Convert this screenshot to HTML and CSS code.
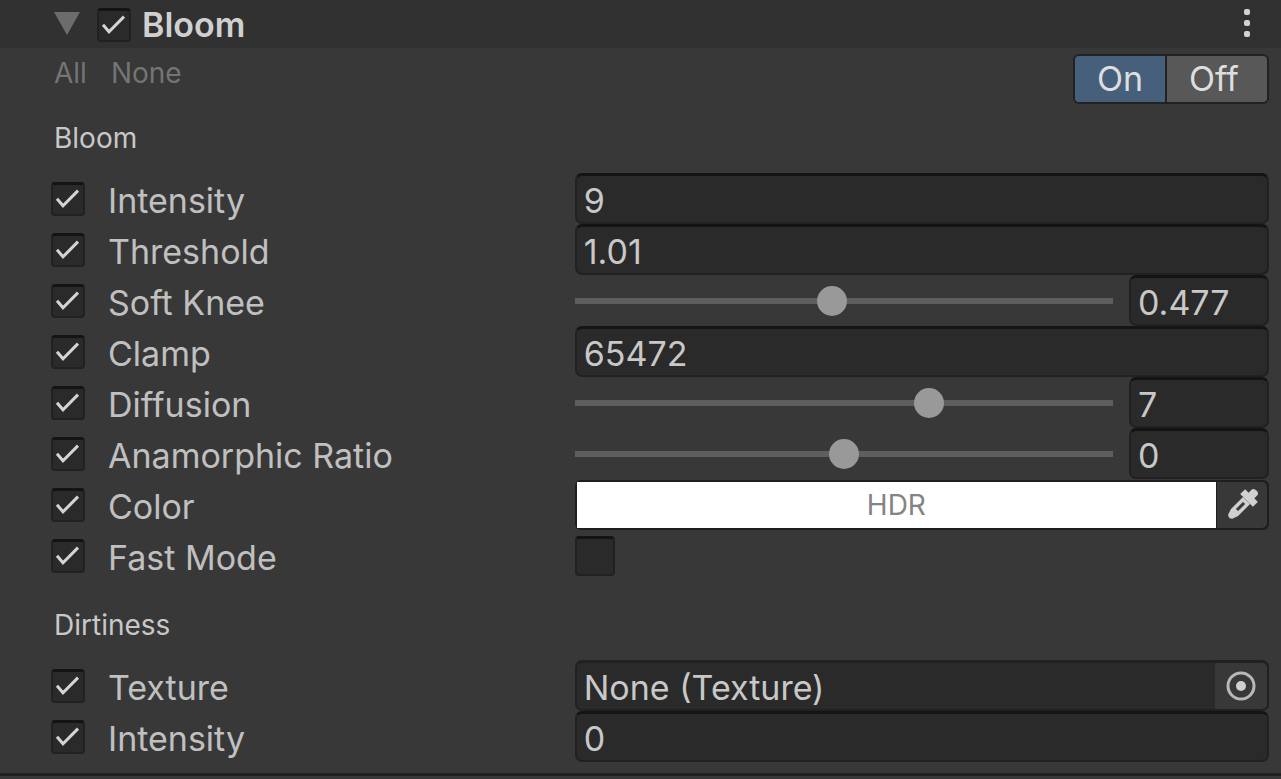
FILE: index.html
```html
<!DOCTYPE html>
<html lang="en">
<head>
<meta charset="utf-8">
<title>Bloom</title>
<link rel="stylesheet" href="styles.css">
</head>
<body>
<main class="panel">
  <header class="header">
    <button class="icon-button" type="button" aria-label="Collapse Bloom">
      <svg class="foldout" viewBox="0 0 26 24"><path d="M0 0H26L13 23Z" fill="#6c6c6c"/></svg>
    </button>
    <input class="check" type="checkbox" id="bloom" checked>
    <label class="title" for="bloom">Bloom</label>
    <button class="icon-button menu" type="button" aria-label="More options">
      <svg class="dots" viewBox="0 0 10 32"><g fill="#d2d2d2"><rect x="2" y="1" width="6" height="6" rx="2"/><rect x="2" y="12" width="6" height="6" rx="2"/><rect x="2" y="23" width="6" height="6" rx="2"/></g></svg>
    </button>
  </header>

  <div class="toolbar">
    <button class="link" type="button">All</button>
    <button class="link" type="button">None</button>
    <div class="switch">
      <button class="switch-option on" type="button" aria-pressed="true">On</button>
      <button class="switch-option off" type="button" aria-pressed="false">Off</button>
    </div>
  </div>

  <section class="group">
    <h2 class="group-title">Bloom</h2>
    <div class="row">
      <div class="name"><input class="check" type="checkbox" id="c1" checked><label for="c1">Intensity</label></div>
      <input class="field" type="text" value="9" aria-label="Intensity">
    </div>
    <div class="row">
      <div class="name"><input class="check" type="checkbox" id="c2" checked><label for="c2">Threshold</label></div>
      <input class="field" type="text" value="1.01" aria-label="Threshold">
    </div>
    <div class="row">
      <div class="name"><input class="check" type="checkbox" id="c3" checked><label for="c3">Soft Knee</label></div>
      <div class="slider-field">
        <input class="slider" type="range" min="0" max="1" step="0.001" value="0.477" aria-label="Soft Knee slider">
        <input class="field" type="text" value="0.477" aria-label="Soft Knee">
      </div>
    </div>
    <div class="row">
      <div class="name"><input class="check" type="checkbox" id="c4" checked><label for="c4">Clamp</label></div>
      <input class="field" type="text" value="65472" aria-label="Clamp">
    </div>
    <div class="row">
      <div class="name"><input class="check" type="checkbox" id="c5" checked><label for="c5">Diffusion</label></div>
      <div class="slider-field">
        <input class="slider" type="range" min="1" max="10" value="7" aria-label="Diffusion slider">
        <input class="field" type="text" value="7" aria-label="Diffusion">
      </div>
    </div>
    <div class="row">
      <div class="name"><input class="check" type="checkbox" id="c6" checked><label for="c6">Anamorphic Ratio</label></div>
      <div class="slider-field">
        <input class="slider" type="range" min="-1" max="1" step="0.01" value="0" aria-label="Anamorphic Ratio slider">
        <input class="field" type="text" value="0" aria-label="Anamorphic Ratio">
      </div>
    </div>
    <div class="row">
      <div class="name"><input class="check" type="checkbox" id="c7" checked><label for="c7">Color</label></div>
      <div class="color-field">
        <button class="swatch" type="button">HDR</button>
        <button class="picker" type="button" aria-label="Pick color">
          <svg class="dropper" viewBox="0 0 34 34">
            <g transform="translate(18 16) rotate(45)">
              <path d="M-4 -16Q-4 -19 0 -19Q4 -19 4 -16V-12H9V-5H-9V-12H-4Z" fill="#d0d0d0"/>
              <path d="M-5 -5H5V12L3 18Q0 21 -3 18L-5 12Z" fill="#d0d0d0"/>
              <path d="M-1 -1H1V8H-1Z" fill="#383838" stroke="#383838"/>
            </g>
          </svg>
        </button>
      </div>
    </div>
    <div class="row">
      <div class="name"><input class="check" type="checkbox" id="c8" checked><label for="c8">Fast Mode</label></div>
      <input class="check large" type="checkbox" aria-label="Fast Mode value">
    </div>
  </section>

  <section class="group">
    <h2 class="group-title">Dirtiness</h2>
    <div class="row">
      <div class="name"><input class="check" type="checkbox" id="c9" checked><label for="c9">Texture</label></div>
      <div class="object-field">
        <input class="object-name" type="text" value="None (Texture)" readonly aria-label="Texture">
        <button class="object-picker" type="button" aria-label="Select texture">
          <svg class="target" viewBox="0 0 32 32"><circle cx="16" cy="16" r="13" fill="none" stroke="#b8b8b8" stroke-width="3"/><circle cx="16" cy="16" r="5" fill="#d0d0d0"/></svg>
        </button>
      </div>
    </div>
    <div class="row">
      <div class="name"><input class="check" type="checkbox" id="c10" checked><label for="c10">Intensity</label></div>
      <input class="field" type="text" value="0" aria-label="Dirtiness intensity">
    </div>
  </section>
</main>
</body>
</html>
```

FILE: styles.css
```css
* { box-sizing: border-box; }

body {
  margin: 0;
  background: #383838;
  color: #c0c0c0;
  font: 34px/40px Inter, "Liberation Sans", sans-serif;
}

button, input { margin: 0; font: inherit; color: inherit; }
button { padding: 0; border: 0; background: none; }
svg { display: block; }

.panel {
  padding-bottom: 11px;
  border-bottom: 3px solid #202020;
}

.header {
  display: flex;
  align-items: center;
  height: 48px;
  padding: 0 29px 0 54px;
  background: #313131;
}
.foldout { width: 26px; height: 24px; }
.header .check { margin: 2px 0 0 17px; }
.title { margin-left: 11px; padding-top: 2px; font-weight: 600; color: #d0d0d0; }
.menu { margin-left: auto; }
.dots { width: 10px; height: 32px; }

.toolbar {
  display: flex;
  align-items: flex-start;
  gap: 24px;
  padding: 6px 12px 0 54px;
}
.link { font-size: 28px; line-height: 38px; color: #747474; }
.switch {
  display: flex;
  gap: 2px;
  margin-left: auto;
  padding: 2px;
  border-radius: 6px;
  background: #222;
}
.switch-option { height: 46px; color: #dedede; line-height: 46px; }
.on { width: 90px; border-radius: 4px 0 0 4px; background: #46607c; }
.off { width: 100px; padding-right: 6px; border-radius: 0 4px 4px 0; background: #585858; }

.group { padding: 0 12px 0 51px; }
.group-title {
  margin: 0;
  padding: 14px 0 15px 3px;
  font-size: 28px;
  font-weight: 400;
  line-height: 40px;
  color: #c8c8c8;
}
.group + .group .group-title { padding-top: 24px; }

.row {
  display: grid;
  grid-template-columns: 43fr 57fr;
  align-items: center;
  height: 51px;
}
.name { display: flex; align-items: center; gap: 23px; }
.name label { padding-top: 4px; }

.check {
  appearance: none;
  flex: none;
  width: 34px;
  height: 34px;
  border: 2px solid #212121;
  border-top: 3px solid #141414;
  border-radius: 4px;
  background: #2a2a2a;
}
.check:checked {
  background: #2a2a2a url("data:image/svg+xml,%3Csvg xmlns='http://www.w3.org/2000/svg' viewBox='0 0 30 30'%3E%3Cpath d='M4 14L10 21L25 6' fill='none' stroke='%23d4d4d4' stroke-width='3'/%3E%3C/svg%3E") center / 30px 30px no-repeat;
}
.large { width: 40px; height: 40px; }

.field, .object-field {
  width: 100%;
  min-width: 0;
  height: 51px;
  border: 2px solid #212121;
  border-top: 3px solid #141414;
  border-radius: 7px;
  background: #2a2a2a;
}
.field { padding: 3px 0 0 7px; color: #c8c8c8; }

.slider-field {
  display: grid;
  grid-template-columns: 1fr 140px;
  align-items: center;
  gap: 16px;
}
.slider {
  appearance: none;
  width: 100%;
  min-width: 0;
  height: 30px;
  background: linear-gradient(#5e5e5e, #5e5e5e) center / 100% 6px no-repeat;
}
.slider::-webkit-slider-thumb {
  appearance: none;
  width: 30px;
  height: 30px;
  border-radius: 50%;
  background: #999;
}

.color-field {
  display: grid;
  grid-template-columns: 1fr 50px;
  gap: 1px;
  height: 50px;
  padding: 2px;
  border-radius: 6px;
  background: #1e1e1e;
}
.swatch { background: #fff; color: #848484; font-size: 28px; }
.picker, .object-picker {
  display: flex;
  align-items: center;
  justify-content: center;
  border-radius: 0 5px 5px 0;
  background: #383838;
}
.dropper { width: 34px; height: 34px; }

.object-field {
  display: grid;
  grid-template-columns: 1fr 52px;
  border-top-color: #212121;
}
.object-name {
  min-width: 0;
  padding: 3px 0 0 7px;
  border: 0;
  background: none;
  color: #c8c8c8;
}
.target { width: 32px; height: 32px; }
```
